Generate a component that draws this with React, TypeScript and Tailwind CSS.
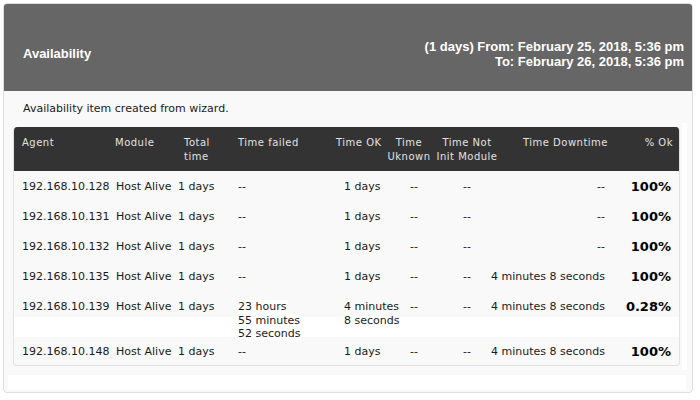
import React from 'react';

type Row = {
  agent: string;
  failed: string[];
  ok: string[];
  downtime: string;
  pct: string;
};

const rows: Row[] = [
  { agent: '192.168.10.128', failed: ['--'], ok: ['1 days'], downtime: '--', pct: '100%' },
  { agent: '192.168.10.131', failed: ['--'], ok: ['1 days'], downtime: '--', pct: '100%' },
  { agent: '192.168.10.132', failed: ['--'], ok: ['1 days'], downtime: '--', pct: '100%' },
  { agent: '192.168.10.135', failed: ['--'], ok: ['1 days'], downtime: '4 minutes 8 seconds', pct: '100%' },
  {
    agent: '192.168.10.139',
    failed: ['23 hours', '55 minutes', '52 seconds'],
    ok: ['4 minutes', '8 seconds'],
    downtime: '4 minutes 8 seconds',
    pct: '0.28%',
  },
  { agent: '192.168.10.148', failed: ['--'], ok: ['1 days'], downtime: '4 minutes 8 seconds', pct: '100%' },
];

// column widths in px, table content starts at x=14
const cols = 'grid grid-cols-[99px_64px_59px_98px_62px_34px_74px_104px_72px]';

function DataRow({ r, last }: { r: Row; last: boolean }) {
  const multi = r.failed.length > 1;
  return (
    <div
      className={`${cols} items-start text-[11px] leading-[14px] text-[#1a1a1a] ${
        multi
          ? 'h-[46px] pt-[9px] bg-[linear-gradient(to_bottom,#f9f9f9_26px,#ffffff_26px,#ffffff_50px)]'
          : last
            ? 'h-[28px] pt-[8px]'
            : 'h-[30px] pt-[9px]'
      }`}
    >
      <div className="pl-[8px] whitespace-nowrap">{r.agent}</div>
      <div className="pl-[3px] whitespace-nowrap">Host Alive</div>
      <div className="pl-[1px] whitespace-nowrap">1 days</div>
      <div className="pl-[2px]">
        {multi ? (
          <div className="leading-[13.5px]">
            {r.failed.map((t) => (
              <div key={t} className="bg-white w-fit pr-[2px] whitespace-nowrap">{t}</div>
            ))}
          </div>
        ) : (
          r.failed[0]
        )}
      </div>
      <div className="pl-[10px] whitespace-nowrap">
        {multi ? (
          <div className="leading-[13.5px]">
            {r.ok.map((t) => (
              <div key={t}>{t}</div>
            ))}
          </div>
        ) : (
          r.ok[0]
        )}
      </div>
      <div className="text-center pl-[2px]">--</div>
      <div className="text-center">--</div>
      <div className="flex justify-end pr-[3px] whitespace-nowrap">{r.downtime}</div>
      <div className="text-right pr-[9px] font-bold text-[13px] text-black">{r.pct}</div>
    </div>
  );
}

export default function App() {
  return (
    <div className="w-[700px] h-[400px] bg-white pt-[3px] pl-[3px] font-['DejaVu_Sans',sans-serif]">
      <div className="w-[690px] h-[390px] border border-[#dedede] rounded-[4px] bg-[#f9f9f9] flex flex-col overflow-hidden">
        {/* title bar */}
        <div className="h-[87px] bg-[#666666] flex items-center justify-between pt-[12px] pl-[19px] pr-[8px] text-white font-bold text-[13px] font-['Liberation_Sans',Arial,sans-serif]">
          <div>Availability</div>
          <div className="text-right leading-[15px]">
            <div>(1 days) From: February 25, 2018, 5:36 pm</div>
            <div>To: February 26, 2018, 5:36 pm</div>
          </div>
        </div>

        <div className="pl-[19px] pt-[11px] text-[11px] leading-[14px] text-[#1a1a1a]">
          Availability item created from wizard.
        </div>

        <div className="flex items-start mt-[11px]">
          <div className="ml-[9px] w-[667px] border border-[#e2e2e2] border-t-0 rounded-[4px] overflow-hidden bg-[#f9f9f9]">
            <div className={`${cols} h-[44px] bg-[#333333] text-[#e2e2e2] text-[10px] leading-[14px] tracking-[0.5px] pt-[9px]`}>
              <div className="pl-[8px]">Agent</div>
              <div className="pl-[2px]">Module</div>
              <div className="pl-[7px]">Total<br />time</div>
              <div className="pl-[2px]">Time failed</div>
              <div className="pl-[2px] whitespace-nowrap">Time OK</div>
              <div className="text-center whitespace-nowrap -ml-[12px] -mr-[4px]">Time<br />Uknown</div>
              <div className="text-center whitespace-nowrap">Time Not<br />Init Module</div>
              <div className="text-right whitespace-nowrap">Time Downtime</div>
              <div className="text-right pr-[7px] whitespace-nowrap">% Ok</div>
            </div>
            {rows.map((r, i) => (
              <DataRow key={r.agent} r={r} last={i === rows.length - 1} />
            ))}
          </div>
          <div className="ml-[2px] mt-[-4px] w-[5px] h-[247px] bg-white" />
        </div>

        <div className="mt-[5px] ml-[4px] w-[678px] h-[15px] bg-white" />
      </div>
    </div>
  );
}
